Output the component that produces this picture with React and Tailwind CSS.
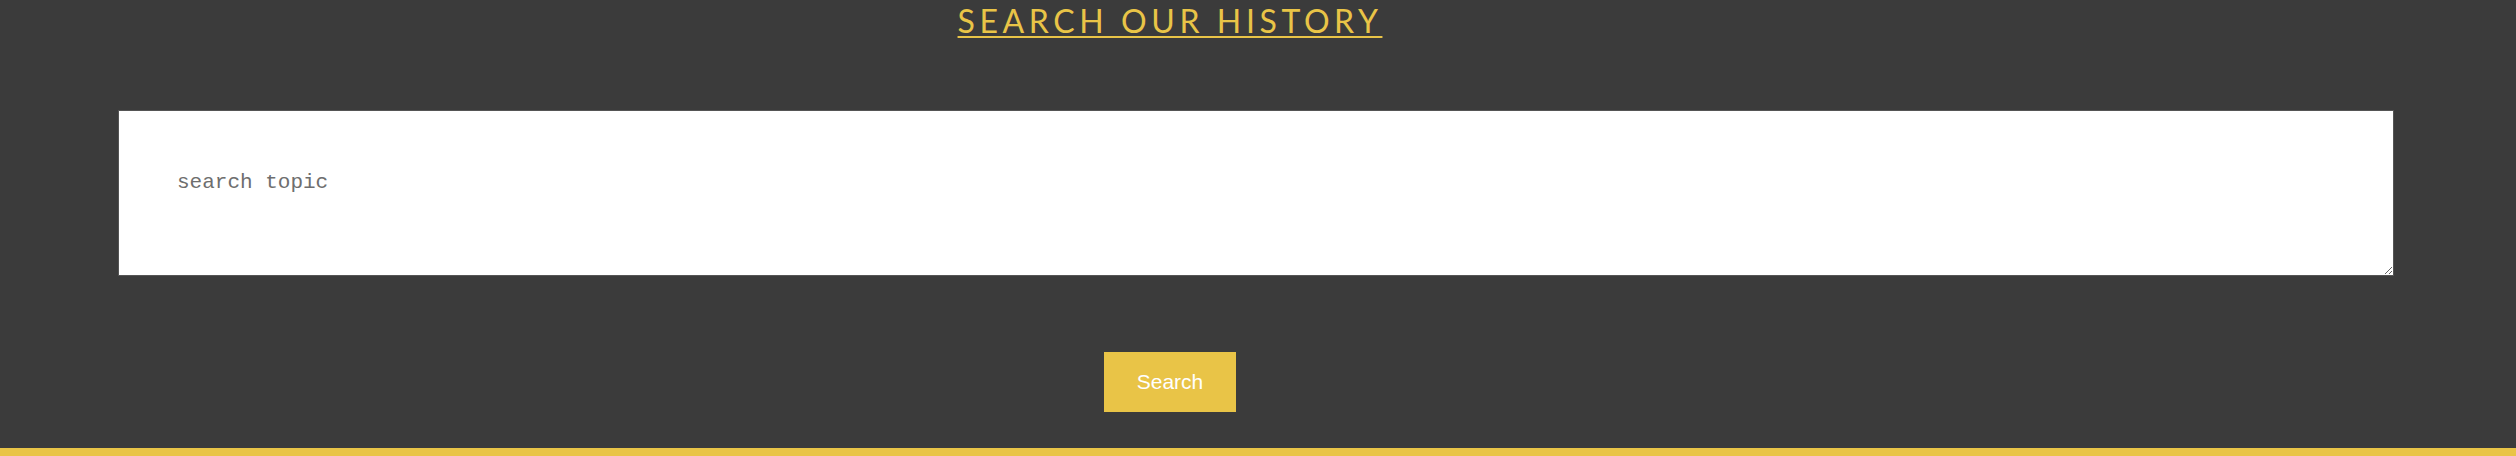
export default function App() {
  return (
    <div className="w-full h-[456px] bg-[#3b3b3b] flex flex-col">
      <div className="flex justify-center pr-[176px] pt-[2px]">
        <h2
          className="text-[32px] leading-[38px] tracking-[4.6px] uppercase text-[#e9c447] underline decoration-2 underline-offset-[3px]"
          style={{ fontFamily: 'Lato, "Open Sans", sans-serif' }}
        >
          Search our history
        </h2>
      </div>

      <div className="pl-[118px] pr-[122px] mt-[70px]">
        <textarea
          placeholder="search topic"
          className="block w-full h-[166px] bg-white px-[58px] pt-[56px] text-[21px] text-[#333] placeholder:text-[#6e6e6e] border border-[#555] outline-none"
          style={{ fontFamily: '"Liberation Mono", monospace' }}
        />
      </div>

      <div className="flex justify-center pr-[176px] mt-[76px]">
        <button
          className="w-[132px] h-[60px] bg-[#e9c447] text-white text-[21px]"
          style={{ fontFamily: '"Liberation Sans", Arial, sans-serif' }}
        >
          Search
        </button>
      </div>

      <div className="mt-auto h-[8px] bg-[#e9c447]" />
    </div>
  );
}
